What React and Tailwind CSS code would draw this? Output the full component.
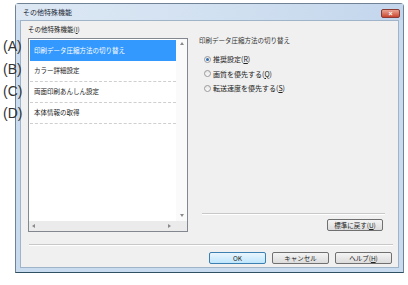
import React from 'react';

const items = [
  { label: '印刷データ圧縮方法の切り替え', selected: true },
  { label: 'カラー詳細設定' },
  { label: '両面印刷あんしん設定' },
  { label: '本体情報の取得' },
];

const options = [
  { text: '推奨設定', key: 'R', checked: true },
  { text: '画質を優先する', key: 'Q' },
  { text: '転送速度を優先する', key: 'S' },
];

const marks = [
  { l: '(A)', cls: 'top-[39px]' },
  { l: '(B)', cls: 'top-[62px]' },
  { l: '(C)', cls: 'top-[84px]' },
  { l: '(D)', cls: 'top-[106px]' },
];

const jp = "font-['Noto_Sans_CJK_JP','Noto_Sans',sans-serif]";

function Tri({ dir }) {
  const pts = {
    up: '0,3 2,0 4,3',
    down: '0,0 4,0 2,3',
    left: '3,0 3,4 0,2',
    right: '0,0 0,4 3,2',
  }[dir];
  return (
    <svg width="4" height="4" viewBox="0 0 4 4">
      <polygon points={pts} fill="#8a8a8a" />
    </svg>
  );
}

function Radio({ checked }) {
  return (
    <span className="w-[7px] h-[7px] rounded-full border border-[#9a9a9a] bg-gradient-to-b from-[#e6e6e6] to-[#fafafa] flex items-center justify-center shrink-0">
      {checked && <span className="w-[3px] h-[3px] rounded-full bg-[#2f6fb4]" />}
    </span>
  );
}

function Button({ children, primary, className = '' }) {
  return (
    <div
      className={`h-[12px] rounded-[2px] border flex items-center justify-center text-[6.5px] leading-none text-[#222] ${
        primary
          ? 'border-[#3c7fb1] bg-gradient-to-b from-[#eaf6fd] to-[#bee6fd]'
          : 'border-[#707070] bg-gradient-to-b from-[#f4f4f4] to-[#dcdcdc]'
      } ${className}`}
    >
      {children}
    </div>
  );
}

export default function App() {
  return (
    <div className={`w-[408px] h-[285px] bg-white relative overflow-hidden ${jp}`}>
      {/* window */}
      <div className="ml-[15px] mt-[3px] w-[389px] h-[270px] border border-[#6f8296] border-b-[#2f4f63] rounded-t-[4px] bg-[#c8dbef] flex flex-col">
        <div className="h-[16px] flex items-center justify-between pl-[7px] pr-[3px] bg-gradient-to-r from-[#dde8f4] via-[#d2e1f1] to-[#c3d6ec]">
          <span className="text-[7px] leading-none text-[#1e2a38] mt-[1px]">その他特殊機能</span>
          <div className="w-[19px] h-[9px] rounded-[2px] border border-[#8a3b33] bg-gradient-to-b from-[#e8a493] to-[#c9452f] flex items-center justify-center self-start mt-[5px]">
            <span className="text-white text-[7px] leading-none font-bold font-['Liberation_Sans',sans-serif]">×</span>
          </div>
        </div>

        {/* client */}
        <div className="mx-[4px] mb-[4px] flex-1 border border-[#9fb4c9] bg-[#f0f0f0] flex flex-col">
          <div className="pt-[3px] pl-[7px] h-[13px] text-[6.5px] leading-[10px] text-[#222]">
            その他特殊機能(<span className="underline">I</span>)
          </div>

          <div className="mt-[1px] pl-[7px] flex h-[197px]">
            {/* list box */}
            <div className="mt-[3px] w-[160px] h-[194px] border border-[#828790] bg-white flex flex-col">
              <div className="flex flex-1 min-h-0">
                <div className="flex-1 pt-[1px] pl-[1px]">
                  {items.map((it, i) => (
                    <div
                      key={i}
                      className={`h-[21px] flex items-center pl-[4px] text-[6.5px] ${
                        it.selected
                          ? 'bg-[#3399ff] text-white'
                          : 'text-[#222] border-b border-dashed border-[#cfcfcf]'
                      }`}
                    >
                      {it.label}
                    </div>
                  ))}
                </div>
                <div className="w-[11px] bg-[#fafafa] flex flex-col items-center justify-between py-[3px]">
                  <Tri dir="up" />
                  <Tri dir="down" />
                </div>
              </div>
              <div className="h-[10px] bg-[#ebebeb] flex items-center justify-between pl-[3px] pr-[15px]">
                <Tri dir="left" />
                <Tri dir="right" />
              </div>
            </div>

            {/* right panel */}
            <div className="ml-[11px] w-[186px] flex flex-col">
              <div className="h-[10px] text-[6.5px] leading-[10px] text-[#333]">印刷データ圧縮方法の切り替え</div>
              <div className="mt-[7px] flex flex-col">
                {options.map((o, i) => (
                  <div key={i} className="h-[14.5px] flex items-center gap-[2px] pl-[5px] text-[7px] text-[#222]">
                    <Radio checked={o.checked} />
                    <span>
                      {o.text}(<span className="underline">{o.key}</span>)
                    </span>
                  </div>
                ))}
              </div>
              <div className="flex-1" />
              <div className="ml-[3px] h-px bg-[#c8c8c8] shadow-[0_1px_0_#ffffff]" />
              <div className="mt-[5px] mb-[1px] flex justify-end pr-[2px]">
                <Button className="w-[56px]">
                  標準に戻す(<span className="underline">U</span>)
                </Button>
              </div>
            </div>
          </div>

          <div className="mt-[12px] ml-[8px] mr-[5px] h-px bg-[#c8c8c8] shadow-[0_1px_0_#ffffff]" />

          <div className="mt-[7px] flex justify-end gap-[6px] pr-[6px]">
            <Button primary className="w-[57px]">OK</Button>
            <Button className="w-[57px]">キャンセル</Button>
            <Button className="w-[57px]">
              ヘルプ(<span className="underline">H</span>)
            </Button>
          </div>
        </div>
      </div>

      {/* annotation labels */}
      {marks.map((m) => (
        <span
          key={m.l}
          className={`absolute left-[3px] ${m.cls} text-[14px] leading-[14px] text-[#333] font-['Liberation_Sans',sans-serif]`}
        >
          {m.l}
        </span>
      ))}
    </div>
  );
}
